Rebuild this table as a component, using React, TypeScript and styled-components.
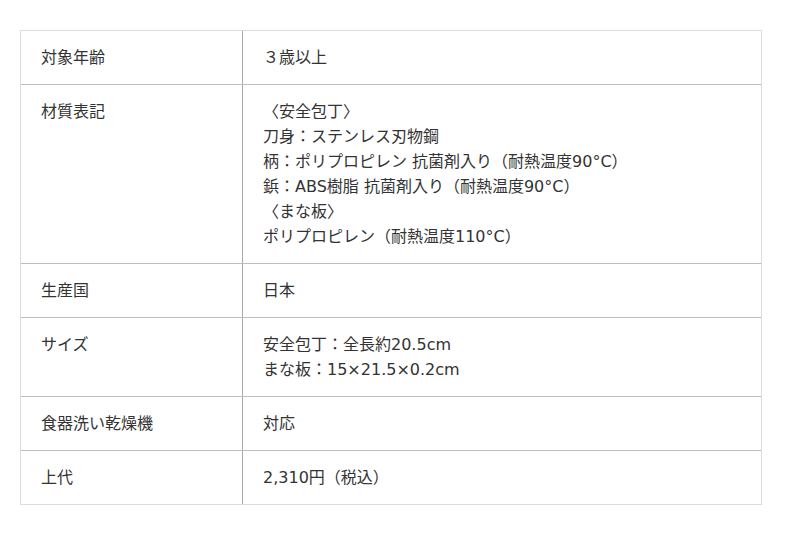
import React from 'react';
import styled, { createGlobalStyle } from 'styled-components';

const GlobalStyle = createGlobalStyle`
  body {
    margin: 0;
    background: #fff;
    font-family: 'DejaVu Sans', 'Noto Sans CJK JP', sans-serif;
    color: #333;
  }
`;

const Wrapper = styled.div`
  padding: 30px 20px;
`;

const SpecTable = styled.table`
  width: 742px;
  border-collapse: separate;
  border-spacing: 0;
  border: 1px solid #dcdcdc;
  font-size: 16px;
  line-height: 25px;
`;

const Row = styled.tr<{ $first?: boolean }>`
  th,
  td {
    border-top: ${(p) => (p.$first ? 'none' : '1px solid #bdbdbd')};
  }
`;

const Label = styled.th`
  width: 201px;
  padding: 14px 0 14px 20px;
  text-align: left;
  font-weight: normal;
  vertical-align: top;
  border-right: 1px solid #a8a8a8;
`;

const Value = styled.td`
  padding: 14px 20px;
  vertical-align: top;
`;

const specs: Array<{ label: string; lines: string[] }> = [
  { label: '対象年齢', lines: ['３歳以上'] },
  {
    label: '材質表記',
    lines: [
      '〈安全包丁〉',
      '刀身：ステンレス刃物鋼',
      '柄：ポリプロピレン 抗菌剤入り（耐熱温度90°C）',
      '鋲：ABS樹脂 抗菌剤入り（耐熱温度90°C）',
      '〈まな板〉',
      'ポリプロピレン（耐熱温度110°C）',
    ],
  },
  { label: '生産国', lines: ['日本'] },
  { label: 'サイズ', lines: ['安全包丁：全長約20.5cm', 'まな板：15×21.5×0.2cm'] },
  { label: '食器洗い乾燥機', lines: ['対応'] },
  { label: '上代', lines: ['2,310円（税込）'] },
];

const App = () => (
  <Wrapper>
    <GlobalStyle />
    <SpecTable>
      <tbody>
        {specs.map((s, i) => (
          <Row key={s.label} $first={i === 0}>
            <Label>{s.label}</Label>
            <Value>
              {s.lines.map((l) => (
                <div key={l}>{l}</div>
              ))}
            </Value>
          </Row>
        ))}
      </tbody>
    </SpecTable>
  </Wrapper>
);

export default App;
